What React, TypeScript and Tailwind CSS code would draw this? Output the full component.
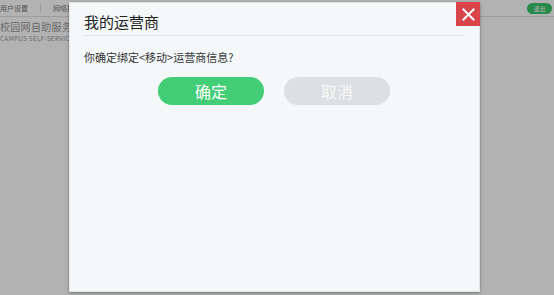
import React from 'react';

const font = { fontFamily: '"Noto Sans CJK SC", "Noto Sans", sans-serif' };

const App: React.FC = () => {
  return (
    <div className="relative w-[554px] h-[295px] overflow-hidden bg-white" style={font}>
      {/* Page behind the dialog */}
      <div className="flex items-center h-[17px] border-b border-[#e0e0e0] pr-[2px]">
        <div className="flex items-center w-[69px] overflow-hidden whitespace-nowrap">
          <span className="text-[7px] leading-none text-[#777]">用户设置</span>
          <span className="mx-[12px] w-px h-[10px] bg-[#ddd] shrink-0" />
          <span className="text-[7px] leading-none text-[#777]">网络报表</span>
        </div>
        <span className="ml-auto flex items-center justify-center w-[25px] h-[11px] rounded-full bg-[#39c46a] text-[6px] text-white">退出</span>
      </div>
      <div className="w-[69px] overflow-hidden whitespace-nowrap pt-[4px]">
        <div className="text-[10px] leading-[12px] tracking-[0.3px] text-[#999]">校园网自助服务平台</div>
        <div className="text-[6.5px] leading-[10px] tracking-[0.2px] text-[#999]">CAMPUS SELF-SERVICE</div>
      </div>

      {/* Overlay */}
      <div className="absolute inset-0 bg-black/30" />

      {/* Dialog */}
      <div className="absolute left-[69px] top-[2px] w-[411px] h-[290px] bg-[#f4f8f9] border border-[#e2e6e8] shadow-[0_1px_3px_rgba(0,0,0,0.35)]">
        <button className="absolute right-[-1px] top-[-1px] w-[24px] h-[24px] bg-[#d9434a] flex items-center justify-center">
          <svg width="13" height="13" viewBox="0 0 13 13">
            <path d="M1.5 1.5 L11.5 11.5 M11.5 1.5 L1.5 11.5" stroke="white" strokeWidth="2" strokeLinecap="square" />
          </svg>
        </button>
        <div className="mx-[14px] h-[33px] flex items-center border-b border-[#dfe3e5]">
          <span className="text-[15px] text-[#222] pt-[7px]">我的运营商</span>
        </div>
        <div className="px-[14px] pt-[13px] text-[11px] leading-[16px] text-[#333]">你确定绑定&lt;移动&gt;运营商信息?</div>
        <div className="flex gap-[20px] pl-[88px] pt-[12px]">
          <button className="w-[106px] h-[28px] rounded-full bg-[#43cd76] text-white text-[16px] leading-none">确定</button>
          <button className="w-[106px] h-[28px] rounded-full bg-[#dde0e2] text-[#f7f8f8] text-[16px] leading-none">取消</button>
        </div>
      </div>
    </div>
  );
};

export default App;
